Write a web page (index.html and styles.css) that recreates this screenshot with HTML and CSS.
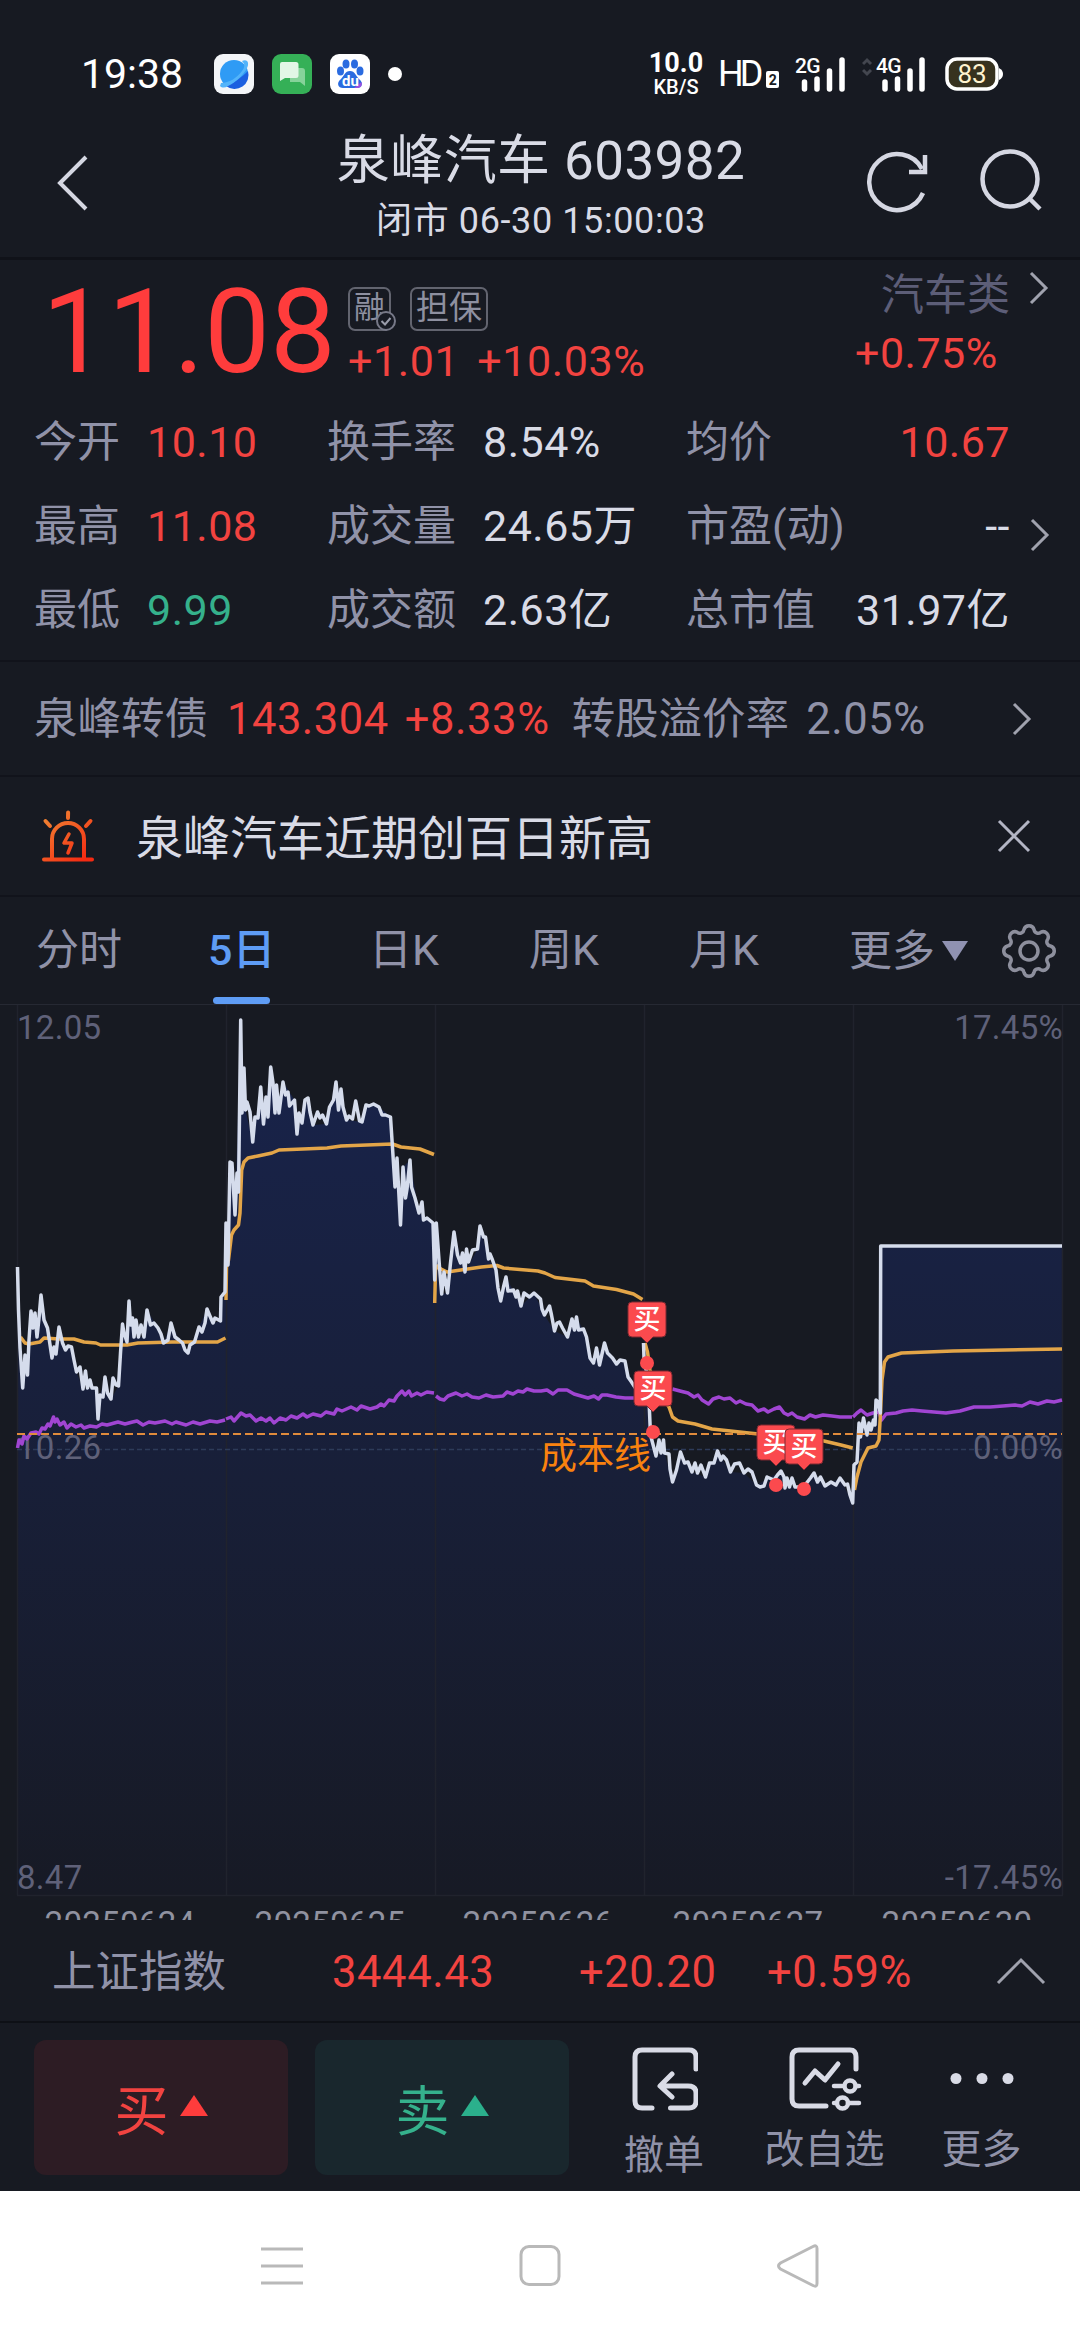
FILE: index.html
```html
<!DOCTYPE html>
<html lang="zh-CN">
<head>
  <meta charset="UTF-8">
  <meta name="viewport" content="width=device-width, initial-scale=1.0">
  <title>泉峰汽车 603982</title>
  <link rel="stylesheet" href="styles.css">
</head>
<body>
  <div class="app">
    <div class="status-bar">
      <span class="clock">19:38</span>
      <div class="status-apps">
        <svg width="40" height="40" viewBox="0 0 40 40">
          <rect width="40" height="40" rx="9" fill="#f3f5f8"/>
          <circle cx="20" cy="20" r="14" fill="#2f9bf5"/>
          <path d="M34 17a14 14 0 0 1-22 15c8-3 16-9 22-15z" fill="#1b5fe0"/>
          <path d="M6 32c2 2 5 2 8 0 8-4 14-10 18-16 2-3 3-7 1-9-1-1-3-1-5 0 3 3 3 6 0 10C23 24 15 29 7 29z" fill="#53b4fa"/>
        </svg>
        <svg width="40" height="40" viewBox="0 0 40 40">
          <rect width="40" height="40" rx="9" fill="#35b057"/>
          <path d="M18 14h12q3 0 3 3v15l-5-4H18z" fill="#86d39a"/>
          <path d="M10 8h14q2.500 0 2.500 2.500v11q0 2.500-2.500 2.500H13l-5 3V10q0-2 2-2z" fill="#e2f6e6"/>
        </svg>
        <svg width="40" height="40" viewBox="0 0 40 40">
          <rect width="40" height="40" rx="9" fill="#fff"/>
          <g fill="#2a6be0">
            <ellipse cx="10.500" cy="17" rx="3.500" ry="4.500"/>
            <ellipse cx="16" cy="10" rx="3.500" ry="4.500"/>
            <ellipse cx="24.500" cy="10" rx="3.500" ry="4.500"/>
            <ellipse cx="30" cy="17" rx="3.500" ry="4.500"/>
            <path d="M20 17c5 0 6 5 9 8 5 4 3 9-2 9H13c-5 0-7-5-2-9 3-3 4-8 9-8z"/>
          </g>
          <path d="M24 34h4q5-1 3.500-6z" fill="#9a4fe0"/>
          <text x="20.500" y="31.500" text-anchor="middle" class="du">du</text>
        </svg>
        <i class="dot"></i>
      </div>
      <div class="net-speed"><b>10.0</b><span>KB/S</span></div>
      <div class="hd">HD<i>2</i></div>
      <svg class="signal" width="53" height="40" viewBox="0 0 53 40">
        <text x="0" y="19" class="net">2G</text>
        <path d="M9.500 28v7M22 25v10M34.500 17v18M47 6v29" stroke="#fff" stroke-width="5.500" stroke-linecap="round"/>
      </svg>
      <svg class="signal2" width="66" height="40" viewBox="0 0 66 40">
        <path d="M1 10l4-4 4 4M1 16l4 4 4-4" fill="none" stroke="#43464f" stroke-width="3"/>
        <text x="14" y="19" class="net">4G</text>
        <path d="M23 28v7M35.500 25v10M48 17v18M60 6v29" stroke="#fff" stroke-width="5.500" stroke-linecap="round"/>
      </svg>
      <svg class="battery" width="58" height="34" viewBox="0 0 58 34">
        <rect x="2" y="2" width="50" height="30" rx="10" fill="#37321f" stroke="#fff" stroke-width="3.500"/>
        <path d="M54 11q4 2 4 6t-4 6z" fill="#fff"/>
        <text x="27" y="26" text-anchor="middle" class="level">83</text>
      </svg>
    </div>

    <header class="header">
      <svg class="back" width="34" height="60" viewBox="0 0 34 60"><path d="M31 4L5 30l26 26" fill="none" stroke="#d5d7e2" stroke-width="4"/></svg>
      <div class="title">
        <h1>泉峰汽车 603982</h1>
        <p>闭市 06-30 15:00:03</p>
      </div>
      <svg class="refresh" width="64" height="64" viewBox="0 0 64 64">
        <path d="M58 43A28 28 0 1 1 57 19" fill="none" stroke="#d5d7e2" stroke-width="4.500"/>
        <path d="M60 5v17H44" fill="none" stroke="#d5d7e2" stroke-width="4.500"/>
      </svg>
      <svg class="search" width="64" height="64" viewBox="0 0 64 64">
        <circle cx="31" cy="30" r="27.500" fill="none" stroke="#d5d7e2" stroke-width="4.500"/>
        <path d="M50 49l11 11" stroke="#d5d7e2" stroke-width="4.500"/>
      </svg>
    </header>

    <section class="quote">
      <div class="quote-top">
        <div class="price">11.08</div>
        <div class="change">
          <div class="tags">
            <span class="tag rong">融<svg width="22" height="22" viewBox="0 0 22 22"><circle cx="11" cy="11" r="9" fill="#171a23" stroke="#777988" stroke-width="2"/><path d="M6.500 11l3.500 3.500L15.500 8" fill="none" stroke="#9a9caa" stroke-width="2"/></svg></span>
            <span class="tag">担保</span>
          </div>
          <div class="diff"><span>+1.01</span><span>+10.03%</span></div>
        </div>
        <div class="sector">
          <div class="sector-name">汽车类</div>
          <div class="sector-diff">+0.75%</div>
        </div>
        <svg class="chev sector-chev" width="20" height="34" viewBox="0 0 20 34"><path d="M2 2l15 15L2 32"/></svg>
      </div>
      <div class="stats-wrap">
        <div class="stats">
          <span>今开</span><b class="up">10.10</b><span>换手率</span><b>8.54%</b><span>均价</span><b class="up end">10.67</b>
          <span>最高</span><b class="up">11.08</b><span>成交量</span><b>24.65万</b><span>市盈(动)</span><b class="end">--</b>
          <span>最低</span><b class="down">9.99</b><span>成交额</span><b>2.63亿</b><span>总市值</span><b class="end">31.97亿</b>
        </div>
        <svg class="chev stats-chev" width="20" height="34" viewBox="0 0 20 34"><path d="M2 2l15 15L2 32"/></svg>
      </div>
    </section>

    <section class="bond">
      <span>泉峰转债</span>
      <span class="up bond-price">143.304</span>
      <span class="up bond-diff">+8.33%</span>
      <span class="bond-rate">转股溢价率</span>
      <span class="bond-num">2.05%</span>
      <svg class="chev" width="20" height="34" viewBox="0 0 20 34"><path d="M2 2l15 15L2 32"/></svg>
    </section>

    <section class="alert">
      <svg width="52" height="54" viewBox="0 0 52 54">
        <defs>
          <linearGradient id="fire" gradientUnits="userSpaceOnUse" x1="8" y1="5" x2="44" y2="50">
            <stop offset="0" stop-color="#f08232"/><stop offset="1" stop-color="#f52a12"/>
          </linearGradient>
        </defs>
        <g fill="none" stroke="url(#fire)" stroke-width="4" stroke-linecap="round">
          <path d="M2 50.500h48M10 50V30a16 16 0 0 1 32 0v20"/>
          <path d="M26.100 3.500L26 9M3.500 12l4.500 5M48.500 12L44 17"/>
          <path d="M27 25l-5 9h8l-4 10" stroke-width="3.500" stroke-linejoin="round"/>
        </g>
      </svg>
      <span>泉峰汽车近期创百日新高</span>
      <svg class="close" width="36" height="36" viewBox="0 0 36 36"><path d="M3 3l30 30M33 3L3 33" stroke="#b3b5c4" stroke-width="3"/></svg>
    </section>

    <nav class="tabs">
      <span class="tab">分时</span>
      <span class="tab active">5日</span>
      <span class="tab">日K</span>
      <span class="tab">周K</span>
      <span class="tab">月K</span>
      <span class="tab more">更多<i></i></span>
      <svg class="gear" width="58" height="58" viewBox="-29 -29 58 58">
        <g fill="none" stroke="#8d8f9d" stroke-width="3.500">
          <path d="M-5 -21.500A5.200 5.200 0 0 1 5 -21.500A4.200 4.200 0 0 0 11.700 -18.700A5.200 5.200 0 0 1 18.700 -11.700A4.200 4.200 0 0 0 21.500 -5A5.200 5.200 0 0 1 21.500 5A4.200 4.200 0 0 0 18.700 11.700A5.200 5.200 0 0 1 11.700 18.700A4.200 4.200 0 0 0 5 21.500A5.200 5.200 0 0 1 -5 21.500A4.200 4.200 0 0 0 -11.700 18.700A5.200 5.200 0 0 1 -18.700 11.700A4.200 4.200 0 0 0 -21.500 5A5.200 5.200 0 0 1 -21.500 -5A4.200 4.200 0 0 0 -18.700 -11.700A5.200 5.200 0 0 1 -11.700 -18.700A4.200 4.200 0 0 0 -5 -21.500Z"/>
          <circle r="9"/>
        </g>
      </svg>
    </nav>

    <!-- 5日分时图 -->
    <svg class="chart" width="1080" height="915" viewBox="0 5 1080 915">
      <defs>
        <linearGradient id="area" gradientUnits="userSpaceOnUse" x1="0" y1="60" x2="0" y2="895">
          <stop offset="0" stop-color="#18234a"/>
          <stop offset="0.500" stop-color="#181f38"/>
          <stop offset="1" stop-color="#171a25"/>
        </linearGradient>
        <g id="buy">
          <path d="M4 0h30q4 0 4 4v27q0 4-4 4H25l-6 6-6-6H4q-4 0-4-4V4q0-4 4-4z" fill="#fb4a4e" stroke="#7c2830" stroke-width="1"/>
          <text x="19" y="27" text-anchor="middle" class="buy-text">买</text>
        </g>
      </defs>

      <path fill="url(#area)" d="M17.500 895V267L20 348 22.700 388 25 355 27.500 375 31 311 37 337 41 295 47.500 328 52 358 59 327 65.500 350 71.500 347 76.500 372 83 389 96.500 388 98 419 100 395 105 377 111 399 118.500 386 122.500 324 127 342 129 301 134 337 144 337 147 310 158 328 163.500 343 171 323 179 340 188 353 199 327 207 309 213 323 220.500 321 221 297 225 292 228 265 230 162 235 215 240.700 20 245.500 110 252.700 142 260.700 87 263.500 124 270.700 67 279 113 283 82 294.500 100 297 134 308 98 313 125 326.500 124 336 82 346.500 120 362 122 366 105 379 107 390.500 117 400.500 225 403 167 410 160 419 213 433 223 434.700 280 436.300 223 441.700 294 447.500 293 454 232 465 272 477.500 249 480 226 488.500 259 496 270 500.700 301 506 277 521 306 534 293 544.500 315 554.500 331 567.500 337 576.500 317 586.500 337 593.500 363 604.500 343 616.500 364 625 361 631.500 382 640 395 643.500 343 650.500 435 657 455 664.500 453 672.500 482 680.500 452 692 472 705.500 477 717.500 451 730.500 472 744 473 756.500 485 781 471 789.500 487 803.500 487 814 473 825 486 840 478 852.700 503 859 423 867 435 876 400 880.700 413V246H1062V895Z"/>

      <path class="grid" d="M17.500 5V895M226.500 5V895M435.500 5V895M644.500 5V895M853.500 5V895M1062.500 5V895M17 895.500H1063"/>
      <path class="zero" d="M17 449.500H1062"/>

      <text class="axis" x="17" y="39">12.05</text>
      <text class="axis" x="17" y="459">10.26</text>
      <text class="axis" x="17" y="889">8.47</text>
      <g text-anchor="end">
        <text class="axis" x="1063" y="39">17.45%</text>
        <text class="axis" x="1063" y="459">0.00%</text>
        <text class="axis" x="1063" y="889">-17.45%</text>
      </g>

      <g class="index-line">
        <path d="M17.500 448L19 440 22 444 24 436 27 439 31 433 36 432 39 434 42 428 45 429 48 424 50 426 53.500 417 55 422 57 419 60 425 64 422 67 428 71 424 76 427 81 425 84 428 90 426 96.500 427 102 424 107 425 118 422 125 424 132.500 422 137 421 143 425 149 422 155 423 165 421 172 424 176 422 186 425 193 422 200 424 210 421 217 422 225 420"/>
        <path d="M226 419L231 417 234 421 241 413 246 416 250 415 256 421 261 418 266 421 270 418 274 423 280 418 286 420 291 416 297 418 303 414 307 417 313 414 321 416 326 412 334 414 337 409 342 411 351 407 357 410 361 406 370 409 377 407 381 404 384 406 389 400 394 401 397 396 402 391 405 395 409 391 411.500 396 417 393 421 395 427 392 434 393"/>
        <path d="M436 396L440 399 444 400 448 396 456 393 462 396 467 394 472 397 479 398 486 395 493 397 503 396 507 392 513 394 518 391 523 392 527 389 534 391 541 391 547 390 553 394 558 390 567 390 574 394 581 396 588 398 594 396 598.500 399 602 395 607 395 616 397 625 398 634 398"/>
        <path d="M672.500 389L680 391 688 393 694 397 698 395 702 400 708.500 404 713 399 719 397 724 399 730 398 736 403 740 401 746 404 752 405 758 411 764 409 768 412 774 409 779.500 407 784 413 788 415 792 413 797 417 804.500 419 810 415 815.500 417 823 415 832 416 840 417 852 417"/>
        <path d="M853 417L857 413 861 410 867 415 873 413 879 412 881.500 420 886 414 896 413 903 411 912 410 922 411 934 412 946 413 960 411 967 409 974 407 990 407 1003 406 1015 405 1022 406 1030 402 1038 404 1047 401 1054 402 1062 400"/>
      </g>

      <g class="avg-line">
        <path d="M20.500 337L25 343 29 344 40 342 44 338 59 339 74 339 84 342 96 343 100.500 345 127 345 138 343 172 342 217.500 342 225.500 338"/>
        <path d="M226 300L226.500 267 228.500 260 231.500 235 234 230 238.500 225 240 213 241.700 170 244 162 248 158 258 156 272 153 279 150 327 148 341 146 392.500 144 401 147 420 149 434 154.500"/>
        <path d="M434.700 303L435.500 270 437.500 266 441 269 447 272 481.500 267 497 265.500 503.500 268 538 271 545 273 555 277.500 585 281 593.500 286 616.500 289.500 633.500 294 642.500 299.500"/>
        <path d="M645 343L647.500 352 650 370 658 391 669 407 672.500 417 678 421 695 424 712 429 753.500 433.500 790 437 824 441 841 445 852.700 448"/>
        <path d="M854.500 490L857 477 861 462 868 448 876 446 879 440 880.500 413 882 380 884.500 362 888 357 901.500 353 953 351 1062 349"/>
      </g>

      <path class="price-line" d="M17.500 267L18.500 310 20 348 22.700 388 25 355 27.500 375 29 340 31 311 33 328 35 313 37 337 39 318 41 295 44 320 47.500 328 52 358 54 347 56 354 59 327 62.500 343 65.500 350 68 346 71.500 347 74 360 76.500 372 80 367 83 389 85.500 371 87.500 388 90 380 92 388 96.500 388 98 419 100 395 103 397 105 377 107.500 393 111 399 113 378 116 385 118.500 386 120.500 353 122.500 324 124 333 127 342 129 301 130.500 325 132.500 318 134 337 136 320 138.500 337 141 325 144 337 147 310 150.500 325 154 323 158 328 161 334 163.500 343 168 340 171 323 175 337 179 340 182.500 343 185 350 188 353 190 345 194.500 342 199 327 202 332 205 323 207 309 209.500 315 213 323 215 318 220.500 321 221 297 225 292 226 223 228 265 230 162 232 163 235 215 237 173 238.500 192 240.700 20 242 113 244 68 245.500 110 247 102 250 112 252.700 142 255 117 258 118 260.700 87 263.500 124 266 97 268 117 270.700 67 273 83 275 113 276.500 85 279 113 283 82 285.500 95 288 92 289.500 106 294.500 100 297 134 299 113 302 123 305 100 308 98 310 112 313 125 317.500 112 320 118 322.500 115 326.500 124 329.500 107 333.500 100 336 82 338.500 110 341 89 343 107 346.500 120 349 116 352.500 119 355.700 101 359.500 121 362 122 366 105 369 106 373.500 104 379 107 382 115 385.500 115 390.500 117 392 140 395 187 397 158 400.500 225 403 167 405.500 198 407 189 410 160 411.500 187 415 198 419 213 422 202 423.500 220 427 218 433 223 434.700 280 436.300 223 439.500 267 441.700 294 444 272 447.500 293 450.500 263 454 232 457.500 255 460.500 263 462.500 253 465 272 466.500 249 468.500 262 472.500 250 477.500 249 480 226 483.500 237 485.500 237 488.500 259 490 254 492.500 260 496 270 498 288 500.700 301 503.500 287 506 277 508 291 513.500 290 516 297 517.500 291 521 306 524 293 529.500 297 534 293 540.500 299 542 309 544.500 315 549.500 306 551.500 315 554.500 331 557 323 559.500 322 562.500 328 567.500 337 572 319 574.500 330 576.500 317 578.500 330 583.500 329 586.500 337 590 358 593.500 363 596.500 348 599.500 365 604.500 343 607.500 353 612.500 358 616.500 364 620 360 625 361 628 377 631.500 382 640 395"/>
      <path class="price-line" d="M643.500 343L644 358 647 375 649 400 650.500 435 656 456 659 440 661 453 663.500 440 664.500 453 669 454 670 469 672.500 482 676.500 470 678 463 680.500 452 684.500 463 688 462 692 472 695 463 697.500 473 701 465 705.500 477 709.500 463 714 463 717.500 451 721 460 723 456 726.500 460 730.500 472 734.500 464 739.500 463 744 473 748 469 752 472 756.500 485 760 487 764 486 767 477 774 480 777.500 475 781 471 784 477 785 488 787 478 789.500 487 792 478 795 487 803.500 487 810.500 478 814 473 817.500 482 820.500 477 825 486 831 482 836 485 840 478 845 485 847.500 484 850 495 852.700 503 854 465 857 462 859 423 860.500 437 863.500 418 867 435 869 423 871 430 873.500 420 875 425 876 400 878 402 880.300 413 880.700 246 1062 246"/>

      <path class="cost" d="M17 434H1062"/>
      <text class="cost-text" x="540" y="469">成本线</text>

      <g fill="#fb4a4e">
        <circle cx="647" cy="363" r="7"/>
        <circle cx="653" cy="432" r="7"/>
        <circle cx="776" cy="485" r="7"/>
        <circle cx="804" cy="489" r="7"/>
      </g>
      <use href="#buy" x="628" y="302"/>
      <use href="#buy" x="634" y="371"/>
      <use href="#buy" x="757" y="425"/>
      <use href="#buy" x="785" y="429"/>

      <g class="dates" text-anchor="middle">
        <text x="120" y="935">20250624</text>
        <text x="330" y="935">20250625</text>
        <text x="538" y="935">20250626</text>
        <text x="748" y="935">20250627</text>
        <text x="957" y="935">20250630</text>
      </g>
    </svg>

    <section class="index-bar">
      <span class="index-name">上证指数</span>
      <span class="up index-value">3444.43</span>
      <span class="up index-diff">+20.20</span>
      <span class="up">+0.59%</span>
      <svg class="chev" width="50" height="28" viewBox="0 0 50 28"><path d="M2 26L25 3l23 23"/></svg>
    </section>

    <section class="actions">
      <div class="trade buy">买<i></i></div>
      <div class="trade sell">卖<i></i></div>
      <div class="action cancel">
        <svg width="68" height="64" viewBox="0 0 68 64">
          <g fill="none" stroke="#d9dbe6" stroke-width="5" stroke-linecap="round" stroke-linejoin="round">
            <path d="M22 61H12q-7 0-7-7V10q0-7 7-7h47q7 0 7 7v12"/>
            <path d="M42 27L30 39l12 11M31 39h27q8 0 8 7v8q0 7-7 7H40.500"/>
          </g>
        </svg>
        <span>撤单</span>
      </div>
      <div class="action choose">
        <svg width="74" height="64" viewBox="0 0 74 64">
          <g fill="none" stroke="#d9dbe6" stroke-width="5" stroke-linecap="round" stroke-linejoin="round">
            <path d="M38 59H11q-7 0-7-7V10q0-7 7-7h51q6 0 6 7v12"/>
            <path d="M17 36l10-12 10 9 13-16"/>
            <path d="M46 39h8M68 39h3M46 56h1M60 56h11" stroke-width="4.500"/>
            <circle cx="62" cy="39" r="5.500" stroke-width="4.500"/>
            <circle cx="54.500" cy="56" r="5.500" stroke-width="4.500"/>
          </g>
        </svg>
        <span>改自选</span>
      </div>
      <div class="action others">
        <svg width="68" height="64" viewBox="0 0 68 64">
          <g fill="#d9dbe6"><circle cx="8" cy="31.500" r="5.500"/><circle cx="34" cy="31.500" r="5.500"/><circle cx="60" cy="31.500" r="5.500"/></g>
        </svg>
        <span>更多</span>
      </div>
    </section>
  </div>

  <footer class="sys-nav">
    <svg width="42" height="44" viewBox="0 0 42 44"><path d="M0 5h42M0 22h42M0 39h42" stroke="#b9b9b9" stroke-width="3"/></svg>
    <svg width="42" height="44" viewBox="0 0 42 44"><rect x="2" y="2.500" width="38" height="38" rx="8" fill="none" stroke="#b9b9b9" stroke-width="3"/></svg>
    <svg width="42" height="44" viewBox="0 0 42 44"><path d="M36 2.500L3.500 19q-4 3 0 6L36 41.500q4 2 4-2v-35q0-4-4-2z" fill="none" stroke="#b9b9b9" stroke-width="3"/></svg>
  </footer>
</body>
</html>
```

FILE: styles.css
```css
* {
  box-sizing: border-box;
}
body {
  margin: 0;
  width: 1080px;
  background: #fff;
  font-family: Roboto, "Noto Sans CJK SC", sans-serif;
  font-weight: 400;
  color: #d9dbe6;
}
h1, p {
  margin: 0;
  font-weight: 400;
}
b {
  font-weight: 400;
}
i {
  font-style: normal;
}
svg {
  display: block;
  flex: none;
}
span {
  white-space: nowrap;
}
.up {
  color: #f24340;
}
.down {
  color: #35b18c;
}
.chev path {
  fill: none;
  stroke: #a0a2ae;
  stroke-width: 3;
}

.app {
  height: 2191px;
  background: #171a22;
  overflow: hidden;
}

/* 状态栏 */
.status-bar {
  display: flex;
  align-items: center;
  height: 108px;
  padding: 40px 0 0 81px;
  color: #fff;
}
.clock {
  width: 133px;
  font-size: 41px;
}
.status-apps {
  display: flex;
  align-items: center;
  gap: 18px;
  width: 435px;
}
.status-apps .dot {
  width: 14px;
  height: 14px;
  border-radius: 50%;
  background: #fff;
}
.du {
  font-size: 15px;
  font-weight: 700;
  fill: #fff;
}
.net-speed {
  display: flex;
  flex-direction: column;
  align-items: center;
  width: 54px;
  font-weight: 700;
}
.net-speed b {
  font-size: 27px;
  line-height: 25px;
  font-weight: 700;
}
.net-speed span {
  font-size: 20px;
  line-height: 22px;
  font-weight: 500;
}
.hd {
  display: flex;
  align-items: flex-end;
  gap: 3px;
  margin-left: 15px;
  width: 77px;
  font-size: 36px;
  line-height: 32px;
  letter-spacing: -4px;
}
.hd i {
  width: 13px;
  height: 17px;
  margin: 0 0 2px 4px;
  border-radius: 2px;
  background: #fff;
  color: #171a22;
  font-size: 14px;
  line-height: 18px;
  font-weight: 700;
  text-align: center;
  letter-spacing: 0;
}
.net {
  font-size: 21px;
  font-weight: 500;
  letter-spacing: -0.8px;
  fill: #fff;
}
.signal2 {
  margin-left: 14px;
}
.battery {
  margin-left: 17px;
}
.level {
  font-size: 26px;
  fill: #fff3cf;
}

/* 标题 */
.header {
  display: flex;
  height: 152px;
  padding: 18px 37px 0 55px;
  border-bottom: 3px solid #101219;
}
.back {
  margin-top: 27px;
}
.title {
  flex: 1;
  text-align: center;
  padding-left: 128px;
}
.title h1 {
  font-size: 53px;
  line-height: 66px;
  padding-top: 2px;
  letter-spacing: 0.4px;
}
.title p {
  font-size: 36px;
  line-height: 54px;
  letter-spacing: 0.6px;
}
.refresh {
  margin: 24px 50px 0 0;
}
.search {
  margin-top: 23px;
}

/* 报价 */
.quote {
  height: 402px;
  border-bottom: 2px solid #11131b;
}
.quote-top {
  display: flex;
  height: 140px;
  padding-left: 42px;
}
.price {
  width: 306px;
  font-size: 117px;
  line-height: 144px;
  color: #ff3c3c;
}
.change {
  flex: 1;
  padding-top: 27px;
}
.tags {
  display: flex;
  gap: 19px;
}
.tag {
  position: relative;
  height: 44px;
  padding: 0 4px;
  border: 2px solid #62646f;
  border-radius: 7px;
  font-size: 33px;
  line-height: 38px;
  color: #8e90a0;
}
.rong {
  width: 43px;
  font-size: 31px;
}
.rong svg {
  position: absolute;
  right: -8px;
  bottom: -3px;
}
.diff {
  display: flex;
  gap: 18px;
  padding-top: 3px;
  font-size: 43px;
  line-height: 54px;
  letter-spacing: 0.6px;
  color: #f24340;
}
.sector {
  width: 155px;
  font-size: 43px;
  line-height: 58px;
  padding-top: 6px;
}
.sector-name {
  text-align: right;
  color: #5d5e78;
}
.sector-diff {
  letter-spacing: 0.5px;
  color: #f24340;
}
.sector-chev {
  margin: 11px 31px 0 19px;
}
.stats-wrap {
  display: flex;
  height: 252px;
}
.stats {
  display: grid;
  grid-template-columns: 113px 180px 156px 203px 140px 184px;
  grid-auto-rows: 84px;
  padding-left: 34px;
  font-size: 43px;
  line-height: 84px;
  color: #9092a8;
}
.stats b {
  letter-spacing: 0.5px;
}
.stats b:not(.up):not(.down) {
  color: #d9dbe6;
}
.stats .end {
  text-align: right;
}
.stats-chev {
  margin: 118px 0 0 20px;
}

/* 转债 */
.bond {
  display: flex;
  align-items: baseline;
  height: 115px;
  padding: 0 48px 0 34px;
  border-bottom: 2px solid #11131b;
  font-size: 43.5px;
  line-height: 116px;
  color: #9092a8;
}
.bond-price {
  margin-left: 19px;
  letter-spacing: 0.5px;
}
.bond-diff {
  margin-left: 16px;
  letter-spacing: 0.6px;
}
.bond-rate {
  margin-left: 22px;
}
.bond-num {
  flex: 1;
  margin-left: 17px;
  letter-spacing: 0.6px;
}
.bond .chev {
  align-self: center;
}

/* 提醒 */
.alert {
  display: flex;
  align-items: center;
  height: 120px;
  padding: 0 48px 0 42px;
  border-bottom: 2px solid #11131b;
  font-size: 47px;
}
.alert span {
  flex: 1;
  margin: -4px 0 0 42px;
}

/* 周期 */
.tabs {
  display: flex;
  height: 108px;
  padding-left: 36px;
  border-bottom: 1px solid #262933;
  font-size: 43px;
  line-height: 106px;
  color: #9092a8;
}
.tab {
  width: 160px;
}
.tab:first-child {
  width: 172px;
}
.tab.active {
  display: flex;
  flex-direction: column;
  width: 161px;
  color: #5e9cf5;
  font-weight: 500;
}
.tab.active::after {
  content: "";
  width: 57px;
  height: 7px;
  margin: -6px 0 0 5px;
  border-radius: 4px;
  background: #5e9cf5;
}
.tab.more {
  display: flex;
  align-items: center;
  gap: 7px;
  width: 151px;
}
.more i {
  border: 13.5px solid transparent;
  border-top: 20px solid #9092b2;
  border-bottom: 0;
}
.gear {
  margin-top: 25px;
}

/* 图表 */
.grid {
  fill: none;
  stroke: #20232d;
  stroke-width: 1.5;
}
.zero {
  stroke: #2d3b59;
  stroke-width: 1.5;
  stroke-dasharray: 5 3;
}
.axis {
  font-size: 33px;
  letter-spacing: 0.3px;
  fill: #5f6179;
}
.price-line, .avg-line path, .index-line path {
  fill: none;
  stroke-linejoin: round;
  stroke-width: 3.5;
}
.price-line {
  stroke: #d5dcec;
}
.avg-line path {
  stroke: #e3a548;
}
.index-line path {
  stroke: #a045d2;
}
.cost {
  stroke: #e08b3c;
  stroke-width: 2;
  stroke-dasharray: 8 4;
}
.cost-text {
  font-size: 37px;
  fill: #f9820f;
}
.buy-text {
  font-size: 27px;
  font-weight: 500;
  fill: #fff;
}
.dates {
  font-size: 33px;
  letter-spacing: 0.3px;
  fill: #9092a0;
}

/* 大盘 */
.index-bar {
  display: flex;
  align-items: baseline;
  height: 103px;
  padding: 0 34px 0 52px;
  border-bottom: 2px solid #0e1016;
  font-size: 43.5px;
  line-height: 106px;
}
.index-name {
  width: 280px;
  color: #9092a8;
}
.index-bar .up {
  letter-spacing: 0.6px;
}
.index-value {
  width: 247px;
}
.index-diff {
  width: 188px;
}
.index-bar .chev {
  align-self: center;
  margin-left: auto;
}

/* 底部按钮 */
.actions {
  display: flex;
  padding: 17px 0 0 34px;
}
.trade {
  display: flex;
  align-items: center;
  justify-content: center;
  gap: 11px;
  width: 254px;
  height: 135px;
  margin-right: 27px;
  border-radius: 12px;
  font-size: 54px;
}
.trade i {
  border: 14px solid transparent;
  border-bottom: 21px solid;
  border-top: 0;
  margin-top: -4px;
}
.trade.buy {
  background: #2d1c24;
  color: #f24340;
}
.trade.buy i {
  border-bottom-color: #ff3c3c;
}
.trade.sell {
  background: #19272d;
  color: #35b18c;
}
.trade.sell i {
  border-bottom-color: #2bb08c;
}
.action {
  display: flex;
  flex-direction: column;
  align-items: center;
  padding-top: 7px;
  font-size: 40px;
  line-height: 60px;
  color: #9092a8;
}
.cancel {
  width: 136px;
}
.cancel span {
  padding-top: 15px;
}
.choose {
  width: 185px;
}
.choose span, .others span {
  padding-top: 9px;
}
.others {
  width: 129px;
}

.sys-nav {
  display: flex;
  gap: 216px;
  height: 149px;
  padding: 53px 0 0 261px;
}
```
